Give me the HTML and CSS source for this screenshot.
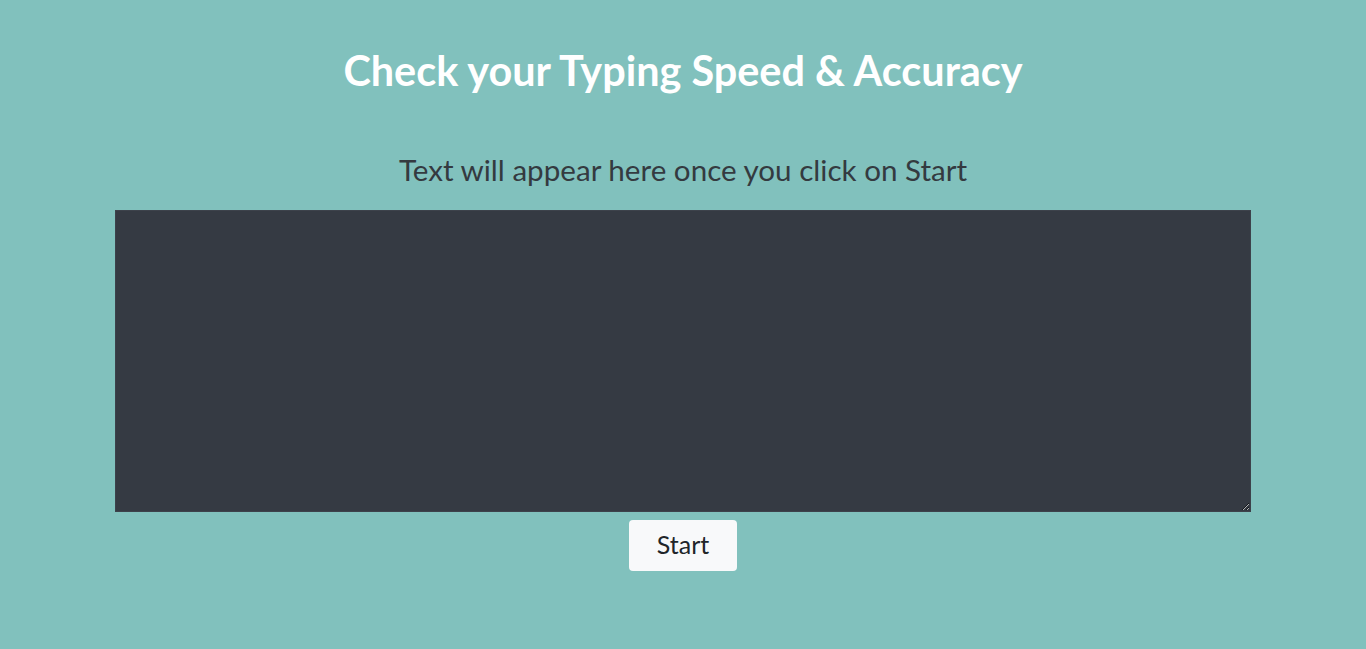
FILE: index.html
```html
<!DOCTYPE html>
<html lang="en">
<head>
<meta charset="utf-8">
<title>Typing Speed</title>
<link rel="stylesheet" href="styles.css">
</head>
<body>
<main class="page">
  <h1 class="title">Check your Typing Speed &amp; Accuracy</h1>
  <p class="prompt">Text will appear here once you click on Start</p>
  <textarea class="area"></textarea>
  <button class="start">Start</button>
</main>
</body>
</html>
```
FILE: styles.css
```css
html, body {
  margin: 0;
  padding: 0;
  background: #81c1bd;
}
.page {
  display: flex;
  flex-direction: column;
  align-items: center;
  font-family: "Lato", "Open Sans", sans-serif;
  min-height: 649px;
}
.title {
  margin: 46px 0 0;
  font-size: 41.4px;
  line-height: 48px;
  font-weight: 700;
  color: #ffffff;
}
.prompt {
  margin: 58px 0 0;
  font-size: 29.6px;
  line-height: 36px;
  color: #343a40;
  font-weight: 400;
}
.area {
  margin-top: 22px;
  width: 1136px;
  height: 302px;
  box-sizing: border-box;
  background: #353a43;
  border: 1px solid #3d424b;
  display: block;
  resize: vertical;
}
.start {
  margin-top: 8px;
  width: 108px;
  height: 51px;
  padding: 0 0 4px;
  background: #f8f9fa;
  border: none;
  border-radius: 4px;
  font-family: "Lato", "Open Sans", sans-serif;
  font-size: 25px;
  color: #212529;
  cursor: pointer;
}
```
